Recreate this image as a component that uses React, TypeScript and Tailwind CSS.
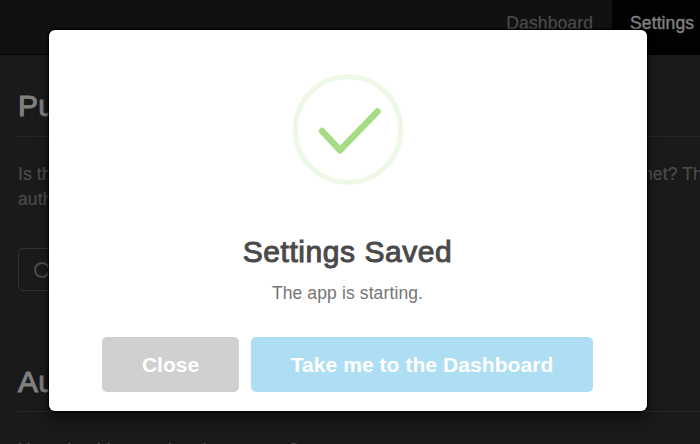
function SuccessIcon() {
  return (
    <svg width="112" height="112" viewBox="0 0 112 112" fill="none" className="mt-[43px] shrink-0">
      <circle cx="56" cy="56.5" r="52.7" stroke="#edf8e7" strokeWidth="5" />
      <path d="M30 58 48 77.3 85.5 38.5" stroke="#a5dc86" strokeWidth="6.4" strokeLinecap="round" strokeLinejoin="round" />
    </svg>
  );
}

function NavBar() {
  return (
    <nav className="flex h-[55px] justify-end border-b border-[#080808] bg-[#111111] text-[17.5px] leading-[46px] tracking-[0.12px]">
      <span className="px-[19px] text-[#4c4c4c] [-webkit-text-stroke:0.2px_#4c4c4c]">Dashboard</span>
      <span className="h-[55px] w-[88px] bg-[#020202] pl-[18px] text-[#808080] [-webkit-text-stroke:0.4px_#808080]">Settings</span>
    </nav>
  );
}

function SavedDialog() {
  return (
    <div className="absolute left-[49px] top-[30px] flex h-[381px] w-[598px] flex-col items-center rounded-[6px] bg-white shadow-[0_0_2px_1px_#000,0_8px_14px_rgba(0,0,0,0.45)]">
      <SuccessIcon />
      <h2 className="mt-[47px] pr-px text-[30px] leading-10 tracking-[0.55px] text-[#4a4a4a] [-webkit-text-stroke:1px_#4a4a4a]">Settings Saved</h2>
      <p className="mt-[9px] pr-px text-[17.5px] leading-6 tracking-[0.12px] text-[#757575]">The app is starting.</p>
      <div className="mt-[32px] flex gap-[12px] pr-px">
        <button className="h-[55px] w-[137px] rounded-[5px] bg-[#d0d0d0] text-[21px] font-bold text-white">Close</button>
        <button className="h-[55px] w-[342px] rounded-[5px] bg-[#aedef4] text-[21px] font-bold tracking-[0.07px] text-white">Take me to the Dashboard</button>
      </div>
    </div>
  );
}

export default function App() {
  return (
    <div className="relative h-[444px] w-[700px] overflow-hidden bg-[#1a1a1a] font-['Liberation_Sans',Arial,sans-serif]">
      <NavBar />
      <main className="pl-[18px] text-[17.5px] leading-[25px] tracking-[0.12px] text-[#4c4c4c] [-webkit-text-stroke:0.2px_#4c4c4c]">
        <h2 className="h-[82px] border-b border-[#262626] pt-[31px] text-[30px] leading-10 text-[#808080] [-webkit-text-stroke:1px_#808080]">Pu</h2>
        <div className="mt-[25px] flex h-[50px] justify-between">
          <p>Is th<br />auth</p>
          <p className="w-[57px] whitespace-nowrap">net? Th</p>
        </div>
        <div className="mt-[36px] flex h-[43px] w-[110px] items-center rounded-[5px] border border-[#303030] pl-[15px]">
          <span className="size-4 rounded-full border-2 border-[#4c4c4c]" />
        </div>
        <h2 className="mt-[71px] h-[50px] border-b border-[#262626] text-[30px] leading-10 text-[#808080] [-webkit-text-stroke:1px_#808080]">Au</h2>
        <p className="mt-[26px] whitespace-nowrap">How should we authenticate users?</p>
      </main>
      <SavedDialog />
    </div>
  );
}
